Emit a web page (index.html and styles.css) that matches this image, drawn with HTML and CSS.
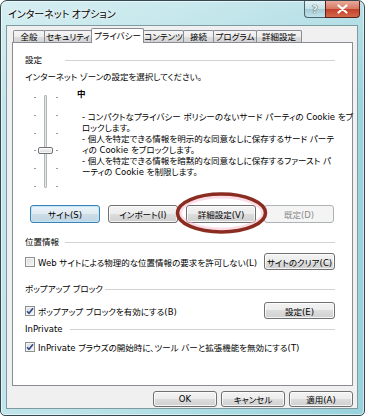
FILE: index.html
```html
<!DOCTYPE html>
<html lang="ja">
<head>
<meta charset="utf-8">
<title>インターネット オプション</title>
<link rel="stylesheet" href="styles.css">
</head>
<body>
<div class="window">
  <div class="titlebar">
    <span class="title">インターネット オプション</span>
    <div class="caps">
      <span class="cap help">?</span>
      <span class="cap close"><svg width="13" height="10" viewBox="0 0 13 10"><path d="M2.5 1.5 L10.5 8.5 M10.5 1.5 L2.5 8.5" stroke="#fff" stroke-width="2.2" stroke-linecap="round"/></svg></span>
    </div>
  </div>
  <div class="client">
    <div class="tabs">
      <span class="tab">全般</span>
      <span class="tab">セキュリティ</span>
      <span class="tab active">プライバシー</span>
      <span class="tab">コンテンツ</span>
      <span class="tab">接続</span>
      <span class="tab">プログラム</span>
      <span class="tab">詳細設定</span>
    </div>
    <div class="panel">
      <div class="sep"><span>設定</span><i></i></div>
      <p class="intro">インターネット ゾーンの設定を選択してください。</p>
      <div class="privacy">
        <div class="slider">
          <div class="track"></div>
          <div class="ticks">
            <div class="tick"><b></b><b></b></div>
            <div class="tick"><b></b><b></b></div>
            <div class="tick"><b></b><b></b></div>
            <div class="tick"><b></b><b></b></div>
            <div class="tick"><b></b><b></b></div>
            <div class="tick"><b></b><b></b></div>
          </div>
          <div class="thumb"></div>
        </div>
        <div class="desc">
          <div class="level">中</div>
          <p class="desc-text">- コンパクトなプライバシー ポリシーのないサード パーティの Cookie をブ<br>ロックします。<br>- 個人を特定できる情報を明示的な同意なしに保存するサード パーテ<br>ィの Cookie をブロックします。<br>- 個人を特定できる情報を暗黙的な同意なしに保存するファースト パ<br>ーティの Cookie を制限します。</p>
        </div>
      </div>
      <div class="btnrow">
        <span class="btn default">サイト(S)</span>
        <span class="btn">インポート(I)</span>
        <span class="btn">詳細設定(V)</span>
        <span class="btn disabled">既定(D)</span>
      </div>
      <div class="sep sep-geo"><span>位置情報</span><i></i></div>
      <div class="opt opt-geo">
        <span class="chk"><span class="box"></span>Web サイトによる物理的な位置情報の要求を許可しない(L)</span>
        <span class="btn side">サイトのクリア(C)</span>
      </div>
      <div class="sep sep-popup"><span>ポップアップ ブロック</span><i></i></div>
      <div class="opt opt-popup">
        <span class="chk"><span class="box"><svg width="8" height="8" viewBox="0 0 8 8"><path d="M1 4.2 L3 6.3 L7 1.3" fill="none" stroke="#2c4a8e" stroke-width="1.6"/></svg></span>ポップアップ ブロックを有効にする(B)</span>
        <span class="btn side">設定(E)</span>
      </div>
      <div class="sep sep-inp"><span>InPrivate</span><i></i></div>
      <div class="opt opt-inp">
        <span class="chk"><span class="box"><svg width="8" height="8" viewBox="0 0 8 8"><path d="M1 4.2 L3 6.3 L7 1.3" fill="none" stroke="#2c4a8e" stroke-width="1.6"/></svg></span>InPrivate ブラウズの開始時に、ツール バーと拡張機能を無効にする(T)</span>
      </div>
    </div>
    <div class="footer">
      <span class="btn foot">OK</span>
      <span class="btn foot">キャンセル</span>
      <span class="btn foot">適用(A)</span>
    </div>
  </div>
  <svg class="annot" width="100" height="50" viewBox="0 0 100 50">
    <ellipse cx="49.5" cy="25" rx="42" ry="17" fill="none" stroke="#f7bfd0" stroke-width="5" opacity="0.55"/>
    <ellipse cx="49.5" cy="25" rx="44" ry="19" fill="none" stroke="#8a2c1f" stroke-width="3.6"/>
  </svg>
</div>
</body>
</html>
```

FILE: styles.css
```css
* { box-sizing: border-box; margin: 0; padding: 0; }
html, body { width: 365px; height: 416px; overflow: hidden; background: #ffffff; }
body {
  font-family: "DejaVu Sans", "Noto Sans CJK JP", sans-serif;
  font-size: 8.5px;
  color: #000;
  font-feature-settings: "palt";
}

.window {
  position: relative;
  width: 365px;
  height: 416px;
  border: 1px solid #34484e;
  border-radius: 7px 7px 5px 5px;
  background:
    linear-gradient(180deg, rgba(255,255,255,0.3) 0%, rgba(255,255,255,0) 25%),
    linear-gradient(95deg, #c4e7ec 0%, #b3e0e6 45%, #98d2dc 100%);
  box-shadow: inset 0 0 0 1px rgba(255,255,255,0.55);
  padding: 0 6px 6px 5px;
  display: flex;
  flex-direction: column;
}

.titlebar {
  height: 24px;
  flex: none;
  display: flex;
  align-items: flex-start;
  padding-left: 2px;
}
.title {
  align-self: center;
  font-family: "Noto Sans CJK JP", sans-serif;
  font-size: 10px;
  line-height: 12px;
  margin-top: 1px;
  text-shadow: 0 0 4px #fff, 0 0 2px #fff;
}
.caps { display: flex; margin-left: auto; margin-right: -2px; }
.cap {
  height: 17px;
  display: flex;
  align-items: center;
  justify-content: center;
  border: 1px solid #4b646b;
  border-top: none;
}
.help {
  width: 21px;
  border-radius: 0 0 0 4px;
  border-right: none;
  background: linear-gradient(180deg, #e2f2f5 0%, #c4e1e8 50%, #a3cbd5 50%, #c1e2ea 100%);
  color: #f4f4f4;
  font-size: 10px;
  font-weight: bold;
  text-shadow: 0 0 1px #30474d, 0 0 1px #30474d;
}
.close {
  width: 35px;
  border-color: #5b2019;
  border-radius: 0 0 4px 0;
  background: linear-gradient(180deg, #e9aa9b 0%, #d77965 48%, #c4412b 52%, #d3684a 100%);
}

.client {
  flex: 1;
  background: #f0f0f0;
  border: 1px solid #7f9aa1;
  display: flex;
  flex-direction: column;
  padding: 2px 4px 0 5px;
}

.tabs {
  display: flex;
  align-items: flex-end;
  height: 15px;
  margin-bottom: -1px;
  padding-left: 2px;
  position: relative;
  z-index: 1;
  flex: none;
}
.tab {
  height: 12px;
  margin-bottom: 1px;
  margin-left: -1px;
  border: 1px solid #898c95;
  border-bottom: none;
  border-radius: 2px 2px 0 0;
  background: linear-gradient(180deg, #f5f5f5 0%, #ececec 50%, #dedede 50%, #d3d3d3 100%);
  line-height: 11px;
  text-align: center;
  white-space: nowrap;
  font-family: "Noto Sans CJK JP", sans-serif;
}
.tab:nth-child(1) { width: 32px; }
.tab:nth-child(2) { width: 48px; }
.tab:nth-child(3) { width: 53px; }
.tab:nth-child(4) { width: 41px; }
.tab:nth-child(5) { width: 31px; }
.tab:nth-child(6) { width: 44px; }
.tab:nth-child(7) { width: 46px; }
.tab.active {
  height: 15px;
  margin-bottom: 0;
  background: #fff;
  line-height: 12px;
  position: relative;
  z-index: 2;
}

.panel {
  flex: 1;
  background: #fff;
  border: 1px solid #898c95;
  padding: 11px 17px 0 12px;
  display: flex;
  flex-direction: column;
}

.sep {
  display: flex;
  align-items: center;
  height: 12px;
  gap: 2px;
  line-height: 12px;
  white-space: nowrap;
}
.sep span { min-width: 38px; }
.sep i { flex: 1; height: 1px; background: #d2d2d2; }
.sep-inp i { margin-left: 5px; }

.intro { margin-top: 5px; line-height: 12px; white-space: nowrap; }

.privacy { margin-top: 4px; display: flex; height: 101px; flex: none; }
.slider {
  position: relative;
  width: 24px;
  height: 101px;
  margin-left: 9px;
  padding: 10px 0 1px;
  flex: none;
}
.track {
  position: absolute;
  left: 10px;
  top: 8px;
  bottom: 0;
  width: 3px;
  background: #e4e6e8;
  border: 1px solid #b4b7ba;
  border-radius: 1px;
}
.ticks {
  height: 100%;
  width: 100%;
  display: flex;
  flex-direction: column;
  justify-content: space-between;
}
.tick { display: flex; justify-content: space-between; width: 100%; height: 1px; }
.tick b { display: block; width: 2px; height: 1px; background: #9a9a9a; }
.thumb {
  position: absolute;
  left: 4px;
  top: 60px;
  width: 15px;
  height: 7px;
  border: 1px solid #6f7377;
  border-radius: 2px;
  background: linear-gradient(180deg, #fafafa 0%, #e9e9e9 50%, #d6d6d6 100%);
  box-shadow: inset 0 0 0 1px rgba(255,255,255,0.7);
}
.desc { margin-left: 19px; }
.level { font-weight: bold; line-height: 12px; font-family: "Noto Sans CJK JP", sans-serif; }
.desc-text { margin-top: 13px; padding-left: 5px; line-height: 11px; white-space: nowrap; }

.btn {
  display: flex;
  align-items: center;
  justify-content: center;
  border: 1px solid #707070;
  border-radius: 3px;
  background: linear-gradient(180deg, #f3f3f3 0%, #ececec 50%, #dddddd 50%, #d0d0d0 100%);
  box-shadow: inset 0 0 0 1px rgba(255,255,255,0.75);
  white-space: nowrap;
  flex: none;
}
.btnrow { margin-top: 17px; padding-left: 5px; display: flex; gap: 8px; height: 18px; flex: none; }
.btnrow .btn { width: 70px; height: 18px; }
.btn.default {
  border-color: #3c7fb1;
  background: linear-gradient(180deg, #eaf3f8 0%, #dfeaf1 50%, #cddde8 50%, #c1d5e2 100%);
  box-shadow: inset 0 0 0 1px rgba(190,232,250,0.9);
}
.btn.disabled {
  border-color: #adb2b5;
  background: #f4f4f4;
  color: #8a8a8a;
  box-shadow: none;
}

.sep-geo { margin-top: 13px; }
.sep-popup { margin-top: 13px; }
.sep-inp { margin-top: 4px; }

.opt {
  display: flex;
  align-items: center;
  justify-content: space-between;
  height: 17px;
  flex: none;
}
.opt-geo { margin-top: 5px; }
.opt-popup { margin-top: 7px; }
.opt-inp { margin-top: 6px; height: 12px; }
.btn.side { width: 71px; height: 17px; }

.chk { display: flex; align-items: center; gap: 3px; white-space: nowrap; }
.box {
  width: 10px;
  height: 10px;
  border: 1px solid #8e8f8f;
  background: linear-gradient(135deg, #dadada 0%, #f6f6f6 100%);
  box-shadow: inset 0 0 0 1px #f4f4f4;
  display: flex;
  align-items: center;
  justify-content: center;
  flex: none;
}

.footer {
  height: 22px;
  flex: none;
  display: flex;
  justify-content: flex-end;
  align-items: flex-start;
  gap: 4px;
  padding-top: 5px;
}
.btn.foot { width: 64px; height: 16px; }

.annot {
  position: absolute;
  left: 171px;
  top: 187px;
  pointer-events: none;
}
```
